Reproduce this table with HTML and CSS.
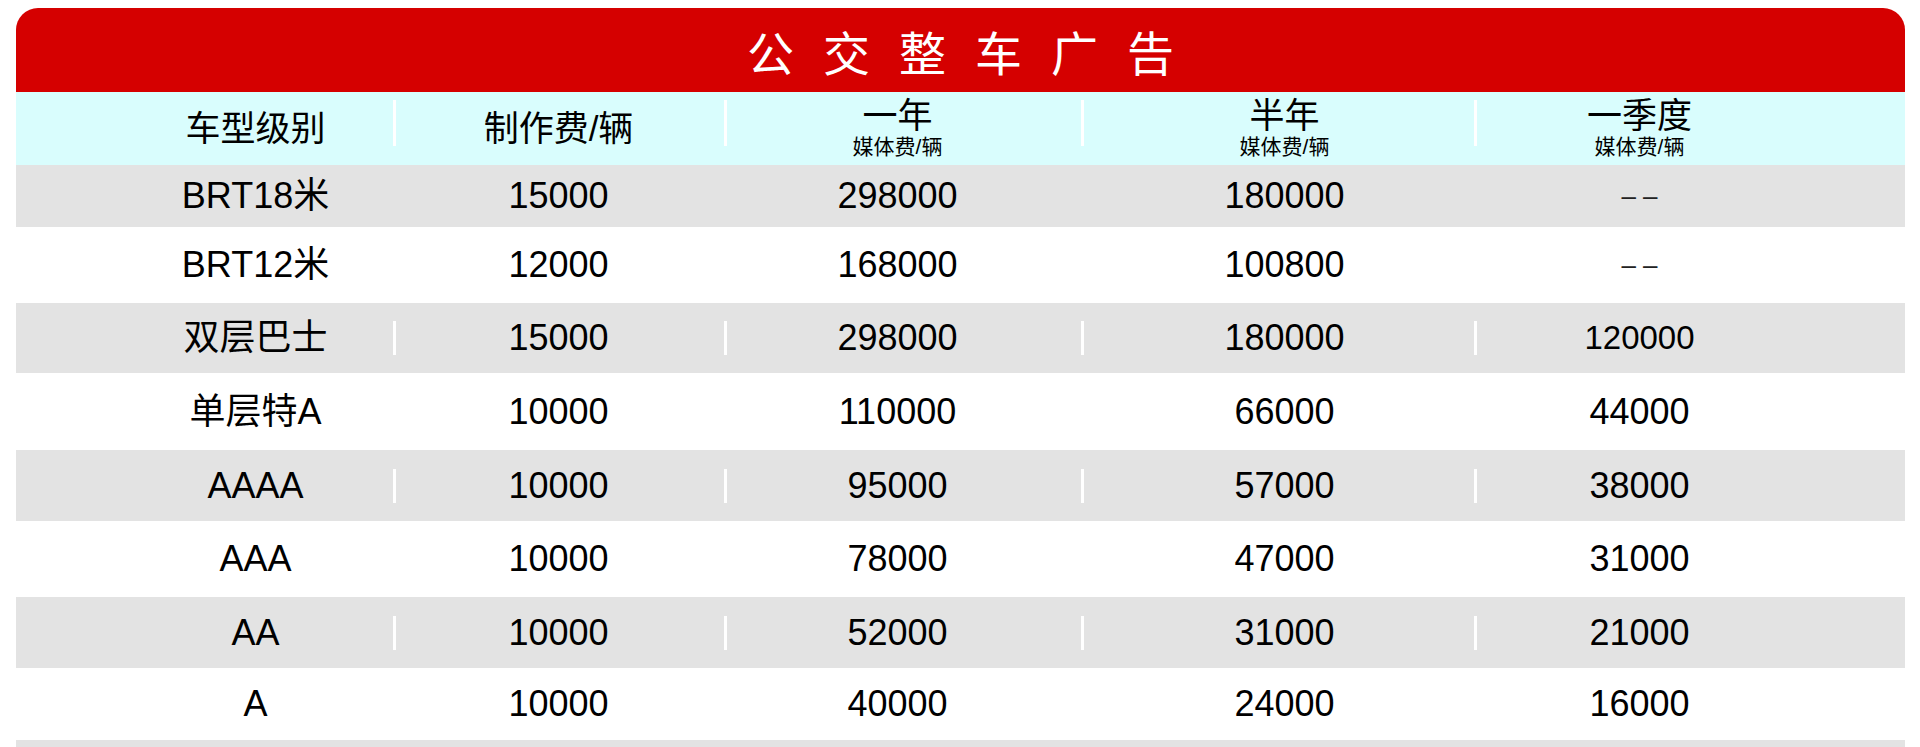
FILE: index.html
```html
<!DOCTYPE html>
<html lang="zh-CN">
<head>
<meta charset="utf-8">
<title>公交整车广告</title>
<link rel="stylesheet" href="styles.css">
</head>
<body>
<div class="board">
  <div class="title">公交整车广告</div>
  <table class="price">
    <colgroup>
      <col class="c1"><col class="c2"><col class="c3"><col class="c4"><col class="c5">
    </colgroup>
    <thead>
      <tr class="head">
        <th class="k1">车型级别</th>
        <th class="k2 sep">制作费/辆</th>
        <th class="k3 sep"><div class="main">一年</div><div class="sub">媒体费/辆</div></th>
        <th class="k4 sep"><div class="main">半年</div><div class="sub">媒体费/辆</div></th>
        <th class="k5 sep"><div class="main">一季度</div><div class="sub">媒体费/辆</div></th>
      </tr>
    </thead>
    <tbody>
      <tr class="gray">
        <td class="k1">BRT18米</td><td class="k2">15000</td><td class="k3">298000</td><td class="k4">180000</td><td class="k5"><span class="dash">– –</span></td>
      </tr>
      <tr>
        <td class="k1">BRT12米</td><td class="k2">12000</td><td class="k3">168000</td><td class="k4">100800</td><td class="k5"><span class="dash">– –</span></td>
      </tr>
      <tr class="gray lines">
        <td class="k1">双层巴士</td><td class="k2 sep">15000</td><td class="k3 sep">298000</td><td class="k4 sep">180000</td><td class="k5 sep small">120000</td>
      </tr>
      <tr>
        <td class="k1">单层特A</td><td class="k2">10000</td><td class="k3">110000</td><td class="k4">66000</td><td class="k5">44000</td>
      </tr>
      <tr class="gray lines">
        <td class="k1">AAAA</td><td class="k2 sep">10000</td><td class="k3 sep">95000</td><td class="k4 sep">57000</td><td class="k5 sep">38000</td>
      </tr>
      <tr>
        <td class="k1">AAA</td><td class="k2">10000</td><td class="k3">78000</td><td class="k4">47000</td><td class="k5">31000</td>
      </tr>
      <tr class="gray lines">
        <td class="k1">AA</td><td class="k2 sep">10000</td><td class="k3 sep">52000</td><td class="k4 sep">31000</td><td class="k5 sep">21000</td>
      </tr>
      <tr>
        <td class="k1">A</td><td class="k2">10000</td><td class="k3">40000</td><td class="k4">24000</td><td class="k5">16000</td>
      </tr>
      <tr class="gray">
        <td class="k1"></td><td class="k2"></td><td class="k3"></td><td class="k4"></td><td class="k5"></td>
      </tr>
    </tbody>
  </table>
</div>
</body>
</html>
```
FILE: styles.css
```css
html, body {
  margin: 0;
  padding: 0;
  background: #ffffff;
}

body {
  font-family: "Liberation Sans", "Noto Sans CJK SC", sans-serif;
  color: #000000;
}

.board {
  padding: 8px 15px 0 16px;
}

.title {
  height: 84px;
  background: #d50000;
  border-radius: 22px 22px 0 0;
  color: #ffffff;
  font-family: "Noto Sans CJK SC", sans-serif;
  font-size: 47px;
  letter-spacing: 29px;
  padding-left: 29px;
  display: flex;
  align-items: center;
  justify-content: center;
  line-height: 1;
}

.price {
  width: 1889px;
  border-collapse: collapse;
  table-layout: fixed;
}

.c1 { width: 377px; }
.c2 { width: 331px; }
.c3 { width: 357px; }
.c4 { width: 393px; }
.c5 { width: 431px; }

.price th,
.price td {
  padding: 0;
  text-align: center;
  vertical-align: middle;
  font-weight: normal;
  line-height: 1.2;
}

.price td {
  font-size: 36px;
}

.price th {
  font-size: 35px;
}

.price .k1 { padding-left: 102px; }
.price .k3 { padding-right: 10px; }
.price .k4 { padding-left: 14px; }
.price .k5 { padding-right: 100px; }

.head {
  height: 73px;
  background: #d9fdfd;
}

.head .main {
  font-size: 35px;
  line-height: 34px;
}

.head .sub {
  font-size: 21px;
  line-height: 22px;
  margin-top: 3px;
}

.head .sep {
  background: linear-gradient(#ffffff, #ffffff) no-repeat 0 8px / 3px 46px;
}

.gray {
  background: #e3e3e3;
}

.lines .sep {
  background: linear-gradient(#ffffff, #ffffff) no-repeat 0 50% / 3px 34px;
}

.price td.small {
  font-size: 33px;
}

.dash {
  font-size: 26px;
  color: #222222;
  position: relative;
  top: -3px;
}

tbody tr:nth-child(1) { height: 62px; }
tbody tr:nth-child(2) { height: 76px; }
tbody tr:nth-child(3) { height: 70px; }
tbody tr:nth-child(4) { height: 77px; }
tbody tr:nth-child(5) { height: 71px; }
tbody tr:nth-child(6) { height: 76px; }
tbody tr:nth-child(7) { height: 71px; }
tbody tr:nth-child(8) { height: 72px; }
tbody tr:nth-child(9) { height: 72px; }
```
